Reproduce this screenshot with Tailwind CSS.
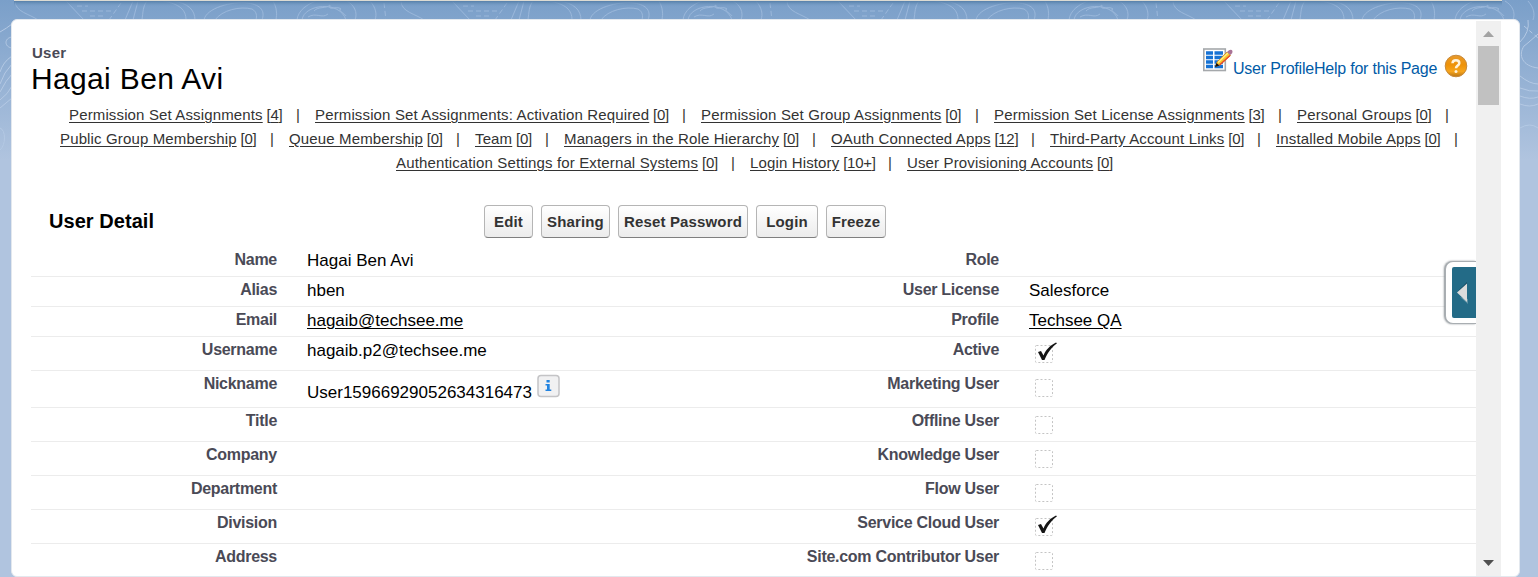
<!DOCTYPE html>
<html lang="en">
<head>
<meta charset="utf-8">
<title>User: Hagai Ben Avi</title>
<script src="https://cdn.jsdelivr.net/npm/@tailwindcss/browser@4"></script>
</head>
<body class="relative h-[577px] w-[1538px] overflow-hidden bg-[#b0c4df] font-['Liberation_Sans',Arial,sans-serif] text-black">
<!-- contour-line backdrop -->
<svg class="absolute inset-0" width="1538" height="577" fill="none">
  <defs>
    <linearGradient id="sky" x1="0" y1="0" x2="0" y2="1"><stop offset="0" stop-color="#7a9fc9"/><stop offset="1" stop-color="#b0c4df"/></linearGradient>
    <linearGradient id="shade" x1="0" y1="0" x2="0" y2="1"><stop offset="0" stop-color="#567fa8"/><stop offset="1" stop-color="#7a9fc9" stop-opacity="0"/></linearGradient>
    <pattern id="topo" x="0" y="0" width="386" height="20" patternUnits="userSpaceOnUse">
      <g stroke="#9ab7da" stroke-width="1" fill="none">
        <path d="M15 1C15 12 30 14 38 20M66 1L84 20M125 20L133 1M133 20L138 1M142 20C143 12 143 6 147 1M173 1C188 3 195 10 195 20M163 1C180 4 186 10 186 20M204 20C206 8 232 1 248 3C262 5 265 12 262 20M215 20C222 10 240 6 252 9C257 12 257 16 256 20M273 1C277 8 277 14 276 20M297 20C298 10 308 4 316 1M347 1C354 5 358 12 355 20M302 20C304 4 340 0 346 20M370 1C376 8 377 14 375 20"/>
        <path d="M314 11C318 6 326 9 330 5C328 12 336 5 341 9C337 10 343 12 346 16M308 17C316 12 322 19 328 14"/>
        <path stroke-dasharray="5 3" d="M77 6H88M82 11H112M90 16H104M121 3L109 20M384 3L386 20"/>
      </g>
    </pattern>
  </defs>
  <rect width="1538" height="160" fill="url(#sky)"/>
  <rect width="1538" height="20" fill="url(#topo)"/>
  <g stroke="#b4c9e4">
    <path d="M12 37C4 38 4 47 12 48M0 32Q7 28 12 24M12 56Q3 62 0 72M12 64Q4 72 0 84M12 74Q6 80 0 92M12 86Q8 94 0 100M12 98L0 108M0 128C6 130 6 145 0 150"/>
    <path d="M1520 42Q1530 32 1528 20M1538 34Q1527 44 1524 46C1518 55 1522 66 1538 68M1520 76Q1530 84 1538 84M1520 88Q1530 92 1538 91M1520 96Q1530 100 1538 97M1520 104Q1530 108 1538 104M1520 128Q1530 122 1538 128"/>
    <path stroke-dasharray="4 3" d="M1524 26L1538 38"/>
  </g>
  <rect x="14" y="1" width="1488" height="6" fill="url(#shade)"/>
  <rect x="14" y="0" width="1488" height="1" fill="#dddbd3"/>
</svg>

<main class="relative mt-[19px] ml-[11px] flex h-[558px] w-[1509px] rounded-md border border-[#e3e8ee] bg-white">
  <div class="relative w-[1464px] overflow-hidden pl-[19px]">
    <header class="flex h-[83px] justify-between">
      <div class="pt-[24px]">
        <p class="pl-px text-[15px] leading-[18px] font-bold tracking-[0.25px] text-[#4a4a56]">User</p>
        <h1 class="text-[30px] leading-[34px] tracking-[0.35px] whitespace-nowrap">Hagai Ben Avi</h1>
      </div>
      <div class="flex pr-[8px] text-[16px] text-[#015ba7]">
        <svg class="mt-[27px]" width="31" height="26" fill="none">
          <rect x="1.800" y="2" width="21.500" height="21.500" fill="#fff" stroke="#a5a8ab" stroke-width="1.600"/>
          <path d="M4 6H11M12.500 6H21M4 10.500H11M12.500 10.500H21M4 15H11M12.500 15H21M4 19.500H11M12.500 19.500H21" stroke="#1672d4" stroke-width="3.400"/>
          <path d="M13.500 19.500L15 15L25 5L28.500 8.500L18 18Z" fill="#f7c62c" stroke="#c87818" stroke-width=".7"/>
          <path d="M16 15.500L26 6" stroke="#fff08a" stroke-width="1.300"/>
          <path d="M17.500 18L28 8.500" stroke="#e8452c" stroke-width="1.200"/>
          <path d="M13 20L14.500 16L17.500 18.500Z" fill="#111"/>
          <path d="M25 5L27 3.200Q29.500 2 30.500 4Q31 6 28.500 8Z" fill="#a97396"/>
        </svg>
        <span class="mt-[38px] w-[211px] leading-[22px] tracking-[-0.22px] whitespace-nowrap">User ProfileHelp for this Page</span>
        <svg class="mt-[34px]" width="24" height="24" viewBox="0 0 24 24">
          <defs><linearGradient id="q" x1="0" y1="0" x2="0" y2="1"><stop offset="0" stop-color="#e89a2c"/><stop offset=".45" stop-color="#ee9208"/><stop offset=".75" stop-color="#f7a51c"/><stop offset="1" stop-color="#b87414"/></linearGradient></defs>
          <circle cx="12" cy="12" r="10.800" fill="url(#q)" stroke="#c78a3c"/>
          <path d="M8.500 9.300C8.700 5.200 15.300 5.300 15.300 9.200C15.300 11.500 12 11.700 12 14.300" fill="none" stroke="#fff3dc" stroke-width="2.500"/><circle cx="12" cy="17.500" r="1.500" fill="#fff3dc"/>
        </svg>
      </div>
    </header>
    <nav id="links" class="h-[102px] text-[15px] leading-[24px] tracking-[0.14px] text-[#333]"></nav>
    <div class="flex h-[42px] items-start">
      <h2 class="w-[453px] pt-[4px] pl-[18px] text-[20px] leading-[24px] font-bold tracking-[0.05px]">User Detail</h2>
      <div class="flex gap-2 text-[15px] font-bold tracking-[0.15px] text-[#333]">
        <button class="h-[33px] w-[49px] rounded border border-[#b5b5b5] border-b-[#7f7f7f] bg-linear-to-b from-white to-[#ececec] pt-px whitespace-nowrap">Edit</button>
        <button class="h-[33px] w-[69px] rounded border border-[#b5b5b5] border-b-[#7f7f7f] bg-linear-to-b from-white to-[#ececec] pt-px whitespace-nowrap">Sharing</button>
        <button class="h-[33px] w-[130px] rounded border border-[#b5b5b5] border-b-[#7f7f7f] bg-linear-to-b from-white to-[#ececec] pt-px whitespace-nowrap">Reset Password</button>
        <button class="h-[33px] w-[62px] rounded border border-[#b5b5b5] border-b-[#7f7f7f] bg-linear-to-b from-white to-[#ececec] pt-px whitespace-nowrap">Login</button>
        <button class="h-[33px] w-[60px] rounded border border-[#b5b5b5] border-b-[#7f7f7f] bg-linear-to-b from-white to-[#ececec] pt-px whitespace-nowrap">Freeze</button>
      </div>
    </div>
    <div id="rows"></div>
    <!-- collapsed side panel handle -->
    <div class="absolute top-[241px] right-0 h-[63px] w-[31px] rounded-l-lg border border-r-0 border-[#a9aeb2] bg-white py-[5px] pl-[6px] shadow-[-1px_0_2px_#8a9095]">
      <div class="flex h-[51px] items-center rounded-l-[2px] bg-[#236b87] pl-[5px]">
        <svg width="14" height="22"><path d="M1 9L10 0V6Z" fill="#164b62"/><path d="M3 15L11 22V17Z" fill="#5f92a5"/><path d="M0 10.500L10 1.500V20Z" fill="#dcdcdc"/></svg>
      </div>
    </div>
  </div>
  <div class="mt-px flex w-[25px] flex-col items-center justify-between bg-[#f0f0f0]">
    <div class="flex flex-col items-center">
      <svg width="25" height="25"><path d="M7 16H18L12.500 10Z" fill="#a3a3a3"/></svg>
      <div class="h-[59px] w-[21px] bg-[#c1c1c1]"></div>
    </div>
    <svg width="25" height="25"><path d="M7 9H18L12.500 15Z" fill="#505050"/></svg>
  </div>
</main>

<script>
const links = [
  [38, [['Permission Set Assignments','4',246],['Permission Set Assignments: Activation Required','0',386],['Permission Set Group Assignments','0',293],['Permission Set License Assignments','3',303],['Personal Groups','0',167]]],
  [29, [['Public Group Membership','0',229],['Queue Membership','0',186],['Team','0',89],['Managers in the Role Hierarchy','0',267],['OAuth Connected Apps','12',219],['Third-Party Account Links','0',226],['Installed Mobile Apps','0',197]]],
  [365, [['Authentication Settings for External Systems','0',354],['Login History','10+',157],['User Provisioning Accounts','0',207]]]
];
document.getElementById('links').innerHTML = links.map(([pad, items], r) =>
  `<div class="flex whitespace-nowrap" style="padding-left:${pad}px">` + items.map(([t, n, w], i) =>
    `<div class="flex shrink-0 justify-between" style="width:${w}px"><span><a class="underline underline-offset-2">${t}</a><span class="tracking-[-0.3px]"> [<a class="underline underline-offset-2">${n}</a>]</span></span>${r === 2 && i === 2 ? '' : '<span class="w-[19px]">|</span>'}</div>`).join('') + '</div>').join('');

const info = '<svg class="ml-[4px] -mt-[9px]" width="24" height="24"><rect x="2" y="1.500" width="21" height="21" rx="3" fill="#f1f1f2" stroke="#c4c4c6" stroke-width="1.500"/><path d="M10.500 6h3.200v2.500h-3.200zM9.500 10h4.200v5.500h1.600v1.600H9.500v-1.600H11v-4H9.500z" fill="#2283e0"/></svg>';
const box = on => `<svg class="mt-[3px]" width="28" height="24"><rect x="6.500" y="5.500" width="17" height="17" rx="1" fill="none" stroke="#c4c4c4" stroke-dasharray="2 2"/>${on ? '<path d="M9 12L12 11L14.500 15.500C17 9.500 21 5.500 27 2.500L28 3.300C22 8 18.500 13 15.500 20L13 20Z" fill="#151515"/>' : ''}</svg>`;
const rows = [
  [30,'Name','Hagai Ben Avi','Role',''],
  [30,'Alias','hben','User License','Salesforce'],
  [30,'Email','<a class="underline underline-offset-2">hagaib@techsee.me</a>','Profile','<a class="underline underline-offset-2">Techsee QA</a>'],
  [34,'Username','hagaib.p2@techsee.me','Active',box(1)],
  [37,'Nickname','<span class="flex pt-[8px]">User15966929052634316473' + info + '</span>','Marketing User',box(0)],
  [34,'Title','','Offline User',box(0)],
  [34,'Company','','Knowledge User',box(0)],
  [34,'Department','','Flow User',box(0)],
  [34,'Division','','Service Cloud User',box(1)],
  [34,'Address','','Site.com Contributor User',box(0)]
];
document.getElementById('rows').innerHTML = rows.map(([h, a, b, c, d]) =>
  `<div class="flex border-b border-[#ececec] whitespace-nowrap" style="height:${h}px">
    <div class="w-[246px] pt-[3px] text-right text-[16px] leading-[20px] font-bold tracking-[-0.28px] text-[#4a4a56]">${a}</div>
    <div class="ml-[30px] w-[392px] pt-[4px] text-[17px] leading-[20px]">${b}</div>
    <div class="w-[300px] pt-[3px] text-right text-[16px] leading-[20px] font-bold tracking-[-0.28px] text-[#4a4a56]">${c}</div>
    <div class="ml-[30px] ${d.startsWith('<svg') ? '' : 'pt-[4px]'} text-[17px] leading-[20px]">${d}</div>
  </div>`).join('');
</script>
</body>
</html>
